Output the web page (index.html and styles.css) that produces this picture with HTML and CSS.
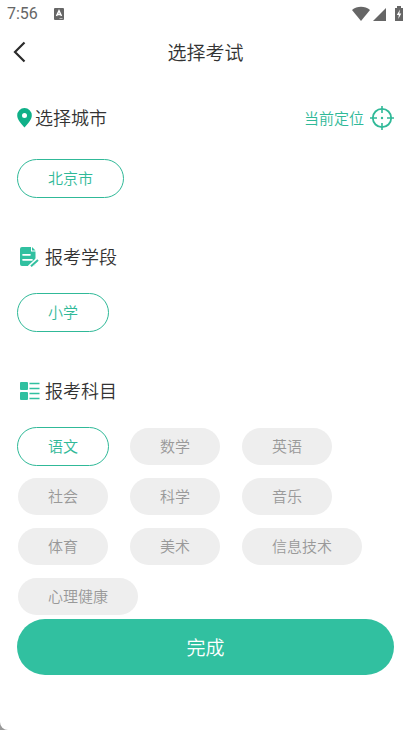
FILE: index.html
```html
<!DOCTYPE html>
<html lang="zh-CN">
<head>
<meta charset="utf-8">
<meta name="viewport" content="width=device-width, initial-scale=1">
<title>选择考试</title>
<link rel="stylesheet" href="styles.css">
</head>
<body>
<div class="app">
  <div class="status">
    <span class="time">7:56</span>
    <svg class="status-app" width="10" height="12" viewBox="0 0 10 12" aria-hidden="true"><rect width="10" height="12" rx="1" fill="#666"/><path d="M2.5 8 5 2.8 7.5 8M3.5 6.4h3" fill="none" stroke="#fff" stroke-width="1.5"/><path d="M5.5 10.5h3" stroke="#bbb"/></svg>
    <svg class="status-icons" width="54" height="16" viewBox="0 0 54 16" aria-hidden="true"><g fill="#666"><path d="M0 4C5-.2 13-.2 18 4L9 15z"/><path d="M34 2v13H21z"/><path d="M43 2h2V0h4v2h2v13h-8z"/></g><path d="M48 3.500 44.800 9h2l-.5 4L49.300 7.500h-2z" fill="#fff"/></svg>
  </div>
  <header class="header">
    <button class="back" aria-label="返回"><svg width="14" height="22" viewBox="0 0 14 22"><path d="M12.500 1.500 3 11l9.500 9.500" fill="none" stroke="#2b2b2b" stroke-width="2.200"/></svg></button>
    <h1 class="title">选择考试</h1>
  </header>
  <main class="content">
    <section class="section">
      <div class="heading heading-city">
        <svg width="15" height="20" viewBox="0 0 15 20" aria-hidden="true"><path fill="#0fb088" fill-rule="evenodd" d="M7.500 0A7.300 7.300 0 0 0 .2 7.300C.2 12 4 15.500 7.500 19.500 11 15.500 14.800 12 14.800 7.300A7.300 7.300 0 0 0 7.500 0zm0 4.900a2.500 2.500 0 1 1 0 5 2.500 2.500 0 0 1 0-5z"/></svg>
        <h2>选择城市</h2>
        <button class="locate"><span>当前定位</span>
          <svg width="24" height="24" viewBox="0 0 24 24" aria-hidden="true"><g fill="none" stroke="#30b998"><circle cx="12" cy="12" r="9.200" stroke-width="1.800"/><path d="M12 0v7M12 17v7M0 12h7M17 12h7" stroke-width="1.600"/></g><circle cx="12" cy="12" r="1.200" fill="#30b998"/></svg>
        </button>
      </div>
      <div class="chips"><button class="chip active">北京市</button></div>
    </section>
    <section class="section">
      <div class="heading">
        <svg class="wide-icon" width="20" height="20" viewBox="0 0 20 20" aria-hidden="true"><path fill="#31c0a0" d="M2 0h9v4.500h4.500V17a2 2 0 0 1-2 2H2a2 2 0 0 1-2-2V2a2 2 0 0 1 2-2z"/><path fill="#31c0a0" d="M12 0l3.500 3.500H12z"/><path d="M3 7.800h7M3 12.800h9" stroke="#fff" stroke-width="1.700" stroke-linecap="round"/><path d="M18.500 12 9.500 20.500" stroke="#fff" stroke-width="4.500"/><path d="M18 13 11 19.300" stroke="#31c0a0" stroke-width="2"/></svg>
        <h2>报考学段</h2>
      </div>
      <div class="chips"><button class="chip active">小学</button></div>
    </section>
    <section class="section">
      <div class="heading">
        <svg class="wide-icon" width="20" height="20" viewBox="0 0 20 20" aria-hidden="true"><g fill="#31c0a0"><rect y="1" width="8" height="8" rx="1"/><rect y="11" width="8" height="8" rx="1"/></g><path d="M9.500 2.500h10M9.500 7.500h10M9.500 12.500h10M9.500 17.500h10" stroke="#31c0a0" stroke-width="1.700"/></svg>
        <h2>报考科目</h2>
      </div>
      <div class="chips">
        <button class="chip active">语文</button>
        <button class="chip">数学</button>
        <button class="chip">英语</button>
        <button class="chip">社会</button>
        <button class="chip">科学</button>
        <button class="chip">音乐</button>
        <button class="chip">体育</button>
        <button class="chip">美术</button>
        <button class="chip">信息技术</button>
        <button class="chip">心理健康</button>
      </div>
    </section>
    <button class="done">完成</button>
  </main>
</div>
</body>
</html>
```
FILE: styles.css
```css
* {
  box-sizing: border-box;
}

html {
  background: #999;
}

body {
  margin: 0;
  font-family: "Noto Sans CJK SC", sans-serif;
  font-weight: 350;
  color: #333;
}

button {
  padding: 0;
  border: 0;
  background: none;
  font: inherit;
  color: inherit;
}

svg {
  display: block;
  flex: none;
}

.app {
  min-height: 100vh;
  background: #fff;
  border-bottom-left-radius: 8px;
}

.status {
  display: flex;
  align-items: center;
  height: 28px;
  padding: 0 5px 0 7px;
  color: #666;
}

.time {
  font: 16px/28px Roboto, sans-serif;
}

.status-app {
  margin-left: 16px;
}

.status-icons {
  margin-left: auto;
}

.header {
  display: grid;
  grid-template-columns: 40px 1fr 40px;
  align-items: center;
  height: 48px;
}

.back {
  padding-left: 12px;
}

.title {
  margin: 0;
  padding-bottom: 2px;
  text-align: center;
  font-size: 19px;
  font-weight: inherit;
}

.content {
  padding: 24px 17px 0;
}

.section {
  margin-bottom: 45px;
}

.section:last-of-type {
  margin-bottom: 3px;
}

.heading {
  display: flex;
  align-items: center;
  height: 28px;
  gap: 5px;
  margin-bottom: 22px;
}

.heading-city {
  height: 36px;
  gap: 3px;
  margin-bottom: 23px;
}

.wide-icon {
  margin-left: 3px;
}

.heading h2 {
  margin: 0;
  padding-bottom: 2px;
  font-size: 18px;
  line-height: 26px;
  font-weight: inherit;
}

.locate {
  display: flex;
  align-items: center;
  gap: 6px;
  margin-left: auto;
  font-size: 15px;
  color: #30b998;
}

.locate span {
  padding-bottom: 2px;
}

.chips {
  display: flex;
  flex-wrap: wrap;
  gap: 11px 20px;
}

.chip {
  height: 39px;
  padding: 0 30px 3px;
  border: 1px solid transparent;
  border-radius: 20px;
  background: #eee padding-box;
  font-size: 15px;
  color: #999;
}

.chip.active {
  border-color: #30b998;
  background: #fff;
  color: #30b998;
}

.done {
  display: block;
  width: 100%;
  height: 56px;
  padding-bottom: 2px;
  border-radius: 28px;
  background: #31c0a0;
  font-size: 19px;
  color: #fff;
}
```
